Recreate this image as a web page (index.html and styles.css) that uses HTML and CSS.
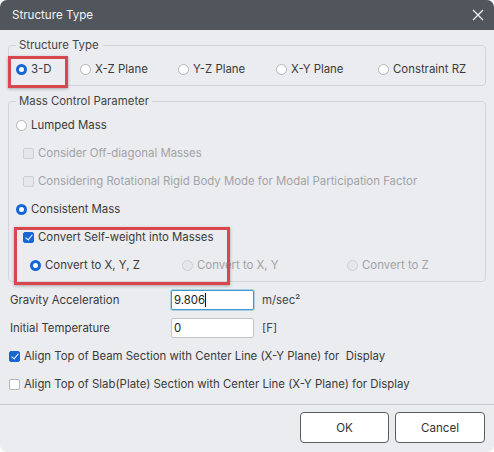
FILE: index.html
```html
<!DOCTYPE html>
<html lang="en">
<head>
  <meta charset="UTF-8" />
  <meta name="viewport" content="width=device-width, initial-scale=1.0" />
  <title>Structure Type</title>
  <link rel="stylesheet" href="styles.css">
</head>
<body>

  <div class="dialog">
    <div class="titlebar">
      <span>Structure Type</span>
      <svg class="close" viewBox="0 0 12 12" width="12" height="12">
        <path d="M1 1 L11 11 M11 1 L1 11" stroke="#f4f4f4" stroke-width="1.3" fill="none" />
      </svg>
    </div>

    <div class="content">
      <fieldset class="group">
        <legend>Structure Type</legend>
        <div class="type-row">
          <label class="opt mark-3d"><span class="radio on"></span>3-D</label>
          <label class="opt"><span class="radio"></span>X-Z Plane</label>
          <label class="opt"><span class="radio"></span>Y-Z Plane</label>
          <label class="opt"><span class="radio"></span>X-Y Plane</label>
          <label class="opt"><span class="radio"></span>Constraint RZ</label>
        </div>
      </fieldset>

      <fieldset class="group mass">
        <legend>Mass Control Parameter</legend>
        <div class="row"><span class="radio"></span>Lumped Mass</div>
        <div class="row indent disabled"><span class="check"></span>Consider Off-diagonal Masses</div>
        <div class="row indent disabled"><span class="check"></span>Considering Rotational Rigid Body Mode for Modal Participation Factor</div>
        <div class="row"><span class="radio on"></span>Consistent Mass</div>
        <div class="mark-self">
          <div class="row indent"><span class="check on"></span>Convert Self-weight into Masses</div>
          <div class="row sub">
            <label class="opt"><span class="radio on"></span>Convert to X, Y, Z</label>
            <label class="opt disabled"><span class="radio"></span>Convert to X, Y</label>
            <label class="opt disabled"><span class="radio"></span>Convert to Z</label>
          </div>
        </div>
      </fieldset>

      <div class="field-row">
        <span class="field-label">Gravity Acceleration</span>
        <span class="input focused">9.806<span class="caret"></span></span>
        <span class="unit">m/sec²</span>
      </div>
      <div class="field-row">
        <span class="field-label">Initial Temperature</span>
        <span class="input">0</span>
        <span class="unit">[F]</span>
      </div>
      <div class="row plain"><span class="check on"></span>Align Top of Beam Section with Center Line (X-Y Plane) for &nbsp;Display</div>
      <div class="row plain"><span class="check"></span>Align Top of Slab(Plate) Section with Center Line (X-Y Plane) for Display</div>
    </div>

    <div class="footer">
      <button class="btn ok">OK</button>
      <button class="btn cancel">Cancel</button>
    </div>
  </div>

</body>
</html>
```

FILE: styles.css
```css
* {
  box-sizing: border-box;
  margin: 0;
  padding: 0;
}
html, body {
  height: 100%;
  background: #ffffff;
  font-family: Inter, "Noto Sans", sans-serif;
  font-size: 11.4px;
  color: #3a3a3a;
}

.dialog {
  width: 494px;
  height: 452px;
  background: #ebecef;
  border-radius: 7px;
  overflow: hidden;
  display: flex;
  flex-direction: column;
}
.titlebar {
  height: 30px;
  flex-shrink: 0;
  background: #51555c;
  color: #f4f4f4;
  display: flex;
  align-items: center;
  justify-content: space-between;
  padding: 0 10px 0 12px;
  font-size: 11.6px;
}

.content {
  padding: 0 8px;
}
.group {
  border: 1px solid #d4d5d9;
  border-radius: 4px;
  padding: 8px 7px;
  margin-top: 7px;
}
.group legend {
  padding: 0 3px;
  line-height: 16px;
  color: #444;
}
.group.mass {
  padding: 2px 7px;
}

.type-row {
  display: grid;
  grid-template-columns: 64px 98px 98px 102px 1fr;
  line-height: 16px;
}
.opt {
  display: flex;
  align-items: center;
  position: relative;
}

.radio, .check {
  display: inline-block;
  flex-shrink: 0;
  width: 11px;
  height: 11px;
  margin-right: 4px;
  background: #fff;
  border: 1px solid #b4b5b9;
  position: relative;
}
.radio {
  border-radius: 50%;
}
.radio.on {
  border: 3px solid #1766d6;
}
.check {
  border-radius: 2px;
}
.check.on {
  background: #1766d6;
  border-color: #1766d6;
}
.check.on::after {
  content: "";
  position: absolute;
  left: 2.5px;
  top: 0px;
  width: 3px;
  height: 6px;
  border-right: 1.6px solid #fff;
  border-bottom: 1.6px solid #fff;
  transform: rotate(40deg);
}

.row {
  height: 28px;
  display: flex;
  align-items: center;
}
.row.indent {
  padding-left: 7px;
}
.row.sub {
  display: grid;
  grid-template-columns: 152px 165px 1fr;
  padding-left: 14px;
}
.disabled {
  color: #a2a3a6;
}
.disabled .radio, .disabled .check {
  background: #e6e7ea;
  border-color: #cdced2;
}

.mark-3d::after {
  content: "";
  position: absolute;
  left: -8px;
  top: -5px;
  width: 54px;
  height: 26px;
  border: 3px solid #d9464e;
  box-shadow: 0 1px 3px rgba(0, 0, 0, 0.3);
}
.mark-self {
  position: relative;
}
.mark-self::after {
  content: "";
  position: absolute;
  left: -2px;
  top: 4px;
  width: 210px;
  height: 52px;
  border: 3px solid #d9464e;
  box-shadow: 0 1px 3px rgba(0, 0, 0, 0.3);
}

.field-row {
  height: 28px;
  display: flex;
  align-items: center;
  padding-left: 2px;
}
.field-row:first-of-type {
  margin-top: 4px;
}
.field-label {
  width: 161px;
}
.input {
  width: 83px;
  height: 20px;
  background: #fff;
  border: 1px solid #c4c5c9;
  border-radius: 2px;
  padding: 0 2px;
  display: flex;
  align-items: center;
  color: #222;
}
.input.focused {
  border-color: #3a9ccc;
  box-shadow: 0 0 0 1px rgba(58, 156, 204, 0.35);
}
.caret {
  display: inline-block;
  width: 1px;
  height: 14px;
  background: #111;
}
.unit {
  margin-left: 8px;
  color: #444;
}
.row.plain {
  padding-left: 1px;
}

.footer {
  margin-top: auto;
  height: 48px;
  flex-shrink: 0;
  border-top: 1px solid #c9cacd;
  padding: 7px 9px 0;
  display: flex;
  justify-content: flex-end;
  align-items: flex-start;
  gap: 6px;
}
.btn {
  height: 31px;
  background: #fff;
  border: 1px solid #5b5c5f;
  border-radius: 4px;
  font-family: Inter, "Noto Sans", sans-serif;
  font-size: 11.6px;
  color: #333;
}
.btn.ok {
  width: 89px;
}
.btn.cancel {
  width: 90px;
}
```
